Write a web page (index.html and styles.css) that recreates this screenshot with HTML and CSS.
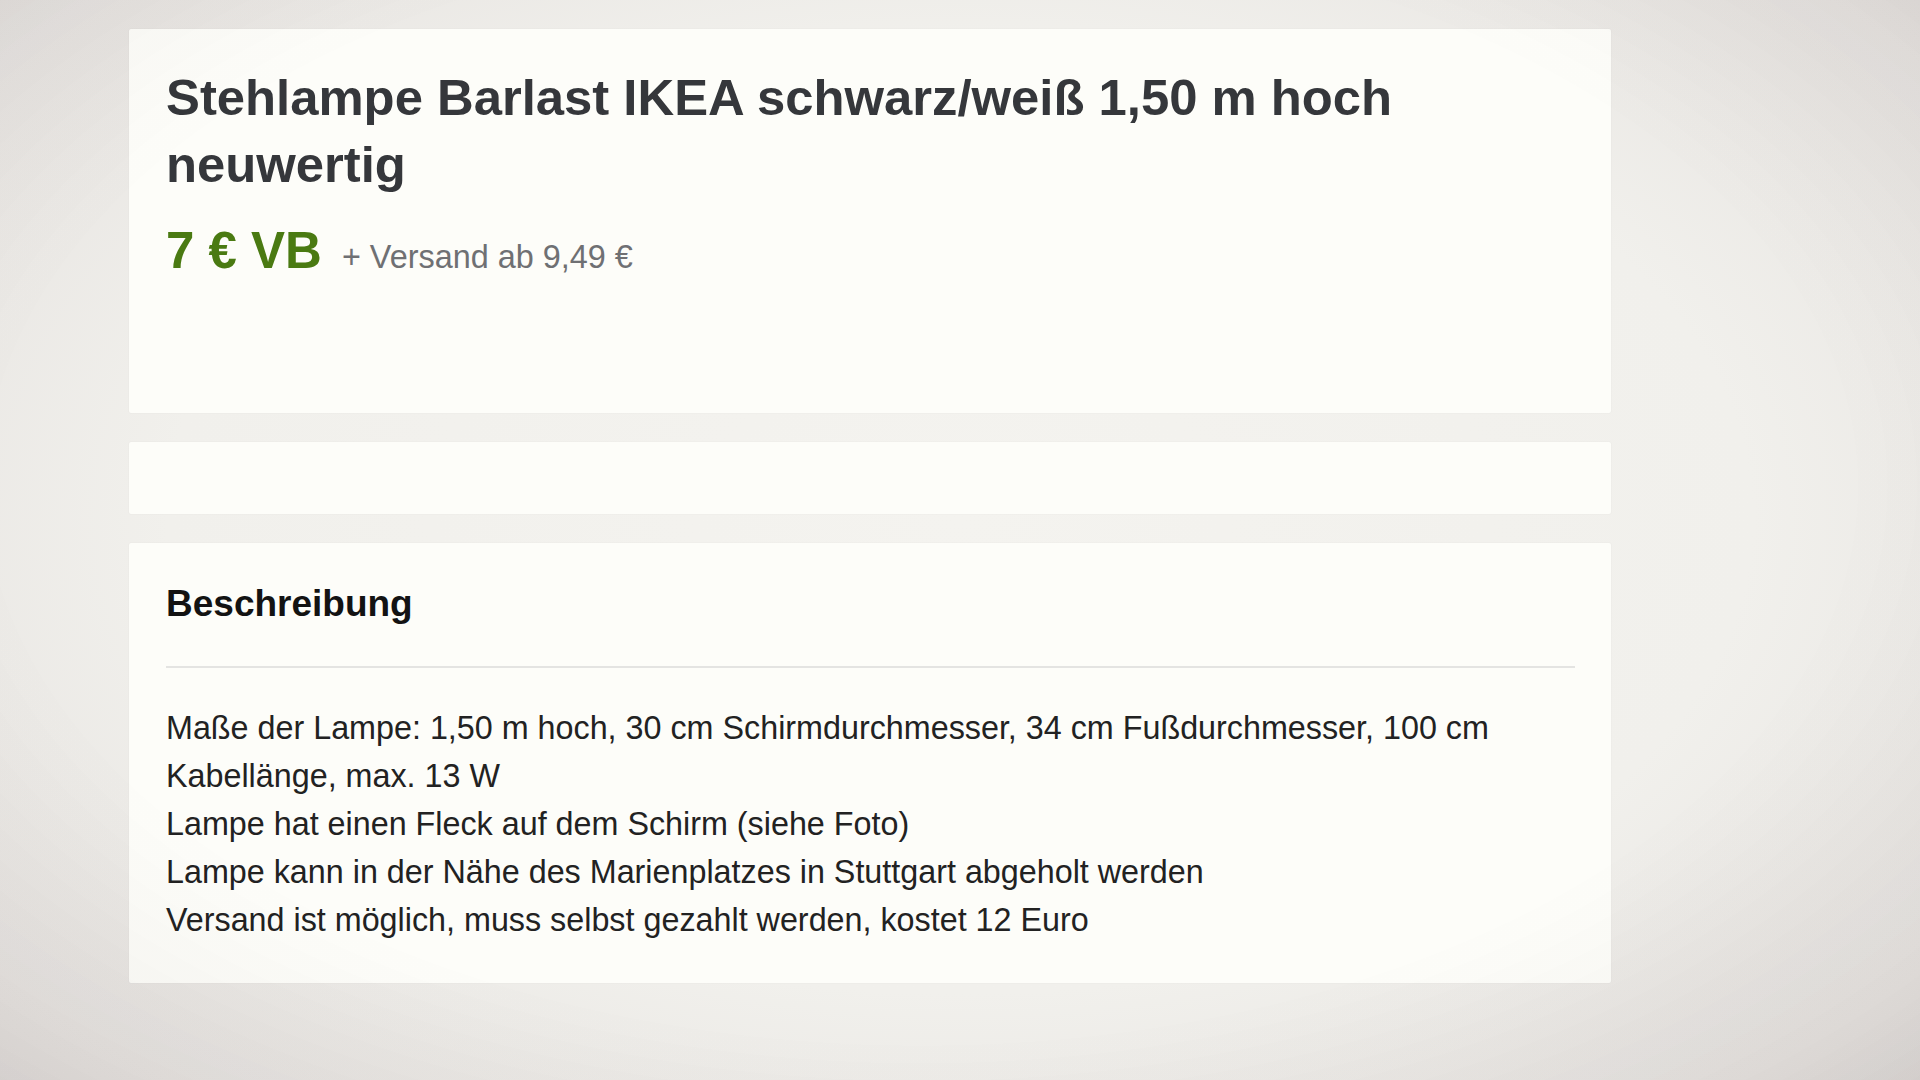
FILE: index.html
```html
<!DOCTYPE html>
<html lang="de">
<head>
<meta charset="utf-8">
<title>Stehlampe Barlast IKEA schwarz/weiß 1,50 m hoch neuwertig</title>
<link rel="stylesheet" href="styles.css">
</head>
<body>
  <main class="ad">
    <section class="card card-head">
      <h1 class="ad-title">Stehlampe Barlast IKEA schwarz/weiß 1,50 m hoch neuwertig</h1>
      <div class="price-row">
        <span class="price">7 € VB</span>
        <span class="shipping">+ Versand ab 9,49 €</span>
      </div>
    </section>

    <section class="card card-empty"></section>

    <section class="card card-desc">
      <h2 class="section-title">Beschreibung</h2>
      <p class="desc">Maße der Lampe: 1,50 m hoch, 30 cm Schirmdurchmesser, 34 cm Fußdurchmesser, 100 cm Kabellänge, max. 13 W<br>
Lampe hat einen Fleck auf dem Schirm (siehe Foto)<br>
Lampe kann in der Nähe des Marienplatzes in Stuttgart abgeholt werden<br>
Versand ist möglich, muss selbst gezahlt werden, kostet 12 Euro</p>
    </section>
  </main>
  <div class="vignette"></div>
</body>
</html>
```

FILE: styles.css
```css
html, body {
  margin: 0;
  padding: 0;
  height: 100%;
}

body {
  font-family: "Liberation Sans", Arial, sans-serif;
  background: radial-gradient(ellipse 75% 80% at 50% 48%, #f4f3ef 0%, #f1f0ec 55%, #e6e3e0 85%, #dcd8d6 100%);
  overflow: hidden;
}

.ad {
  width: 1482px;
  margin-left: 129px;
  padding-top: 29px;
  display: flex;
  flex-direction: column;
  gap: 29px;
}

.card {
  background: #fdfdf9;
  box-shadow: 0 0 2px rgba(0, 0, 0, 0.06);
  border-radius: 2px;
  padding: 0 37px;
}

/* Title + price */
.card-head {
  padding-top: 35px;
  height: 384px;
  box-sizing: border-box;
}

.ad-title {
  margin: 0;
  font-size: 50.8px;
  line-height: 67px;
  font-weight: 700;
  color: #35373b;
}

.price-row {
  margin-top: 23px;
  display: flex;
  align-items: baseline;
  gap: 20px;
}

.price {
  font-size: 51px;
  line-height: 60px;
  font-weight: 700;
  color: #4a7a12;
}

.shipping {
  font-size: 32.4px;
  color: #6f7073;
}

.card-empty {
  height: 72px;
}

/* Description */
.card-desc {
  padding-top: 38px;
  padding-bottom: 39px;
}

.section-title {
  margin: 0;
  font-size: 37px;
  line-height: 46px;
  font-weight: 700;
  color: #131313;
  padding-bottom: 39px;
  border-bottom: 2px solid #e4e4e2;
  margin-right: -1px;
}

.desc {
  margin: 36px 0 0;
  font-size: 32.3px;
  line-height: 48px;
  color: #222222;
}

/* soft darkening towards the screen edges */
.vignette {
  position: fixed;
  inset: 0;
  pointer-events: none;
  background: radial-gradient(ellipse 80% 85% at 48% 45%, rgba(0, 0, 0, 0) 60%, rgba(40, 20, 20, 0.05) 85%, rgba(40, 20, 20, 0.1) 100%);
}
```
